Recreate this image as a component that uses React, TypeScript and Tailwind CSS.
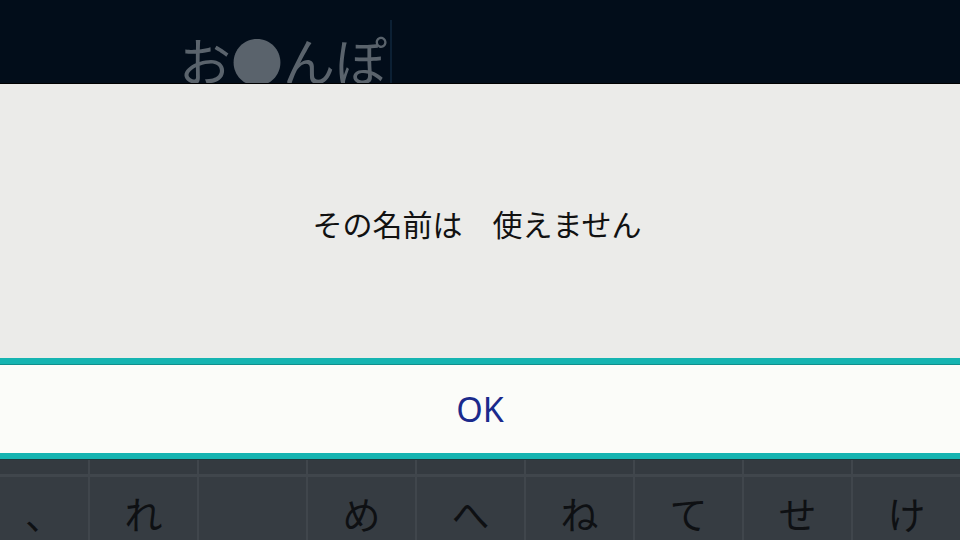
import React from "react";

const jp = { fontFamily: '"Noto Sans CJK JP", "Noto Sans", sans-serif' };

const keys = ["、", "れ", "", "め", "へ", "ね", "て", "せ", "け"];

function KeyRow({ labels, tall }: { labels: string[]; tall?: boolean }) {
  return (
    <div className={`flex gap-[2px] ${tall ? "h-[63px]" : "h-[14px]"}`}>
      {labels.map((k, i) => (
        <div
          key={i}
          className={`${i === 0 ? "w-[88px] shrink-0" : "flex-1"} ${tall ? "bg-[#363c42]" : "bg-[#343a40]"} flex justify-center overflow-hidden ${tall ? "pt-[17px]" : ""}`}
        >
          {tall && (
            <span className="text-[38px] leading-none text-[#0e1013]" style={jp}>
              {k}
            </span>
          )}
        </div>
      ))}
    </div>
  );
}

export default function App() {
  return (
    <div className="w-[960px] h-[540px] overflow-hidden flex flex-col bg-[#020d1a]" style={jp}>
      {/* top input bar */}
      <div className="h-[83px] shrink-0 bg-[#020d1a] flex items-end pl-[179px] overflow-hidden">
        <span className="text-[52px] leading-none text-[#5a636c] translate-y-[3px]">お●んぽ</span>
        <div className="w-[2px] h-[63px] bg-[#0c2034] ml-[3px]" />
      </div>
      <div className="h-[1px] bg-[#000000]" />
      {/* message panel */}
      <div className="h-[274px] shrink-0 bg-[#ebebe9] flex items-center justify-center pt-[4px] pr-[6px]">
        <span className="text-[30px] leading-none text-[#111111]">その名前は　使えません</span>
      </div>
      {/* teal line */}
      <div className="h-[6px] bg-[#15b4b1]" />
      <div className="h-[1px] bg-[#0f8f8c]" />
      {/* OK button */}
      <div className="h-[88px] shrink-0 bg-[#fbfcf9] flex items-center justify-center">
        <span
          className="text-[34px] leading-none text-[#1a2a8c]"
          style={{ fontFamily: '"Noto Sans", "Open Sans", sans-serif' }}
        >
          OK
        </span>
      </div>
      <div className="h-[6px] bg-[#15b4b1]" />
      <div className="h-[1px] bg-[#1d3a3c]" />
      {/* keyboard */}
      <div className="flex-1 bg-[#40464c] flex flex-col gap-[3px] overflow-hidden">
        <KeyRow labels={keys.map(() => "")} />
        <KeyRow labels={keys} tall />
      </div>
    </div>
  );
}
